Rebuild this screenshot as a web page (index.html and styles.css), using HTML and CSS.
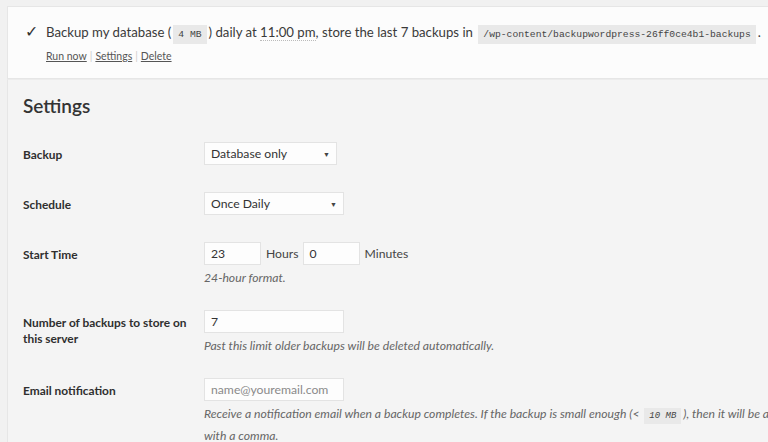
FILE: index.html
```html
<!DOCTYPE html>
<html>
<head>
<meta charset="utf-8">
<link rel="stylesheet" href="styles.css">
</head>
<body>
<div class="summary">
  <p class="sentence"><span class="check">✓</span>Backup my database (<code>4 MB</code>) daily at <abbr class="time">11:00 pm</abbr>, store the last 7 backups in <code>/wp-content/backupwordpress-26ff0ce4b1-backups</code>.</p>
  <p class="actions"><a>Run now</a><span class="sep">|</span><a>Settings</a><span class="sep">|</span><a>Delete</a></p>
</div>
<div class="settings">
  <h2>Settings</h2>
  <div class="form">
    <div class="label">Backup</div>
    <div class="field"><div class="select w132"><span>Database only</span><span class="arrow">▼</span></div></div>

    <div class="label">Schedule</div>
    <div class="field"><div class="select w139"><span>Once Daily</span><span class="arrow">▼</span></div></div>

    <div class="label">Start Time</div>
    <div class="field has-desc">
      <div class="inline"><div class="input w57">23</div><span class="unit">Hours</span><div class="input w57">0</div><span class="unit">Minutes</span></div>
      <p class="desc">24-hour format.</p>
    </div>

    <div class="label">Number of backups to store on this server</div>
    <div class="field has-desc">
      <div class="input w139">7</div>
      <p class="desc">Past this limit older backups will be deleted automatically.</p>
    </div>

    <div class="label">Email notification</div>
    <div class="field has-desc">
      <div class="input w139 ph">name@youremail.com</div>
      <p class="desc">Receive a notification email when a backup completes. If the backup is small enough (&lt; <code class="small">10 MB</code>), then it will be attached to the email. Separate multiple email addresses<br>with a comma.</p>
    </div>
  </div>
</div>
</body>
</html>
```
FILE: styles.css
```css
html, body {
  margin: 0;
  padding: 0;
  background: #f1f1f1;
  font-family: Lato, "Open Sans", sans-serif;
  color: #444;
  overflow: hidden;
  height: 442px;
}
.summary {
  margin: 6px 0 0 7px;
  background: #fcfcfc;
  border: 1px solid #e6e6e6;
  border-right: none;
  height: 73px;
  box-sizing: border-box;
  padding: 13px 0 0 17px;
  white-space: nowrap;
}
.sentence {
  margin: 0;
  font-size: 13.2px;
  line-height: 22px;
  color: #3a3a3a;
}
.check {
  display: inline-block;
  width: 21px;
  font-size: 16px;
  color: #333;
}
code {
  font-family: "Liberation Mono", monospace;
  font-size: 9.7px;
  background: #e9e9e9;
  padding: 4px 5px;
  margin: 0 2px;
  color: #444;
}
.time {
  text-decoration: none;
  border-bottom: 1px dotted #bbb;
}
.actions {
  margin: 4px 0 0 21px;
  font-size: 10.5px;
  color: #555;
}
.actions a {
  text-decoration: underline;
  color: #555;
}
.sep {
  color: #ccc;
  margin: 0 3px;
}
.settings {
  margin-left: 7px;
  background: #f4f4f4;
  border-left: 1px solid #e6e6e6;
  border-top: 1px solid #ececec;
  padding: 14px 0 0 15px;
  height: 348px;
  overflow: hidden;
}
h2 {
  margin: 0;
  font-size: 19px;
  font-weight: 600;
  color: #333;
  line-height: 24px;
}
.form {
  display: grid;
  grid-template-columns: 181px 1fr;
  margin-top: 24px;
  white-space: nowrap;
}
.label {
  font-size: 11.9px;
  font-weight: 700;
  color: #2f2f2f;
  white-space: normal;
  width: 170px;
  line-height: 16px;
  padding-top: 5px;
}
.field {
  padding-bottom: 27px;
}
.field.has-desc {
  padding-bottom: 23px;
}
.select, .input {
  background: #fdfdfd;
  border: 1px solid #e3e3e3;
  box-sizing: border-box;
  height: 23px;
  font-size: 12.2px;
  color: #333;
  padding: 0 6px;
  display: flex;
  align-items: center;
  justify-content: space-between;
}
.arrow {
  font-size: 7px;
  color: #444;
}
.w132 { width: 133px; }
.w139 { width: 140px; }
.w57 { width: 57px; }
.inline {
  display: flex;
  align-items: center;
}
.unit {
  font-size: 12.2px;
  margin: 0 4px 0 5px;
  color: #444;
}
.ph { color: #8a8a8a; }
.desc {
  margin: 3px 0 0 0;
  font-size: 12.2px;
  font-style: italic;
  color: #666;
  line-height: 19px;
  white-space: nowrap;
}
code.small {
  font-size: 9px;
  padding: 3px 5px;
}
```
